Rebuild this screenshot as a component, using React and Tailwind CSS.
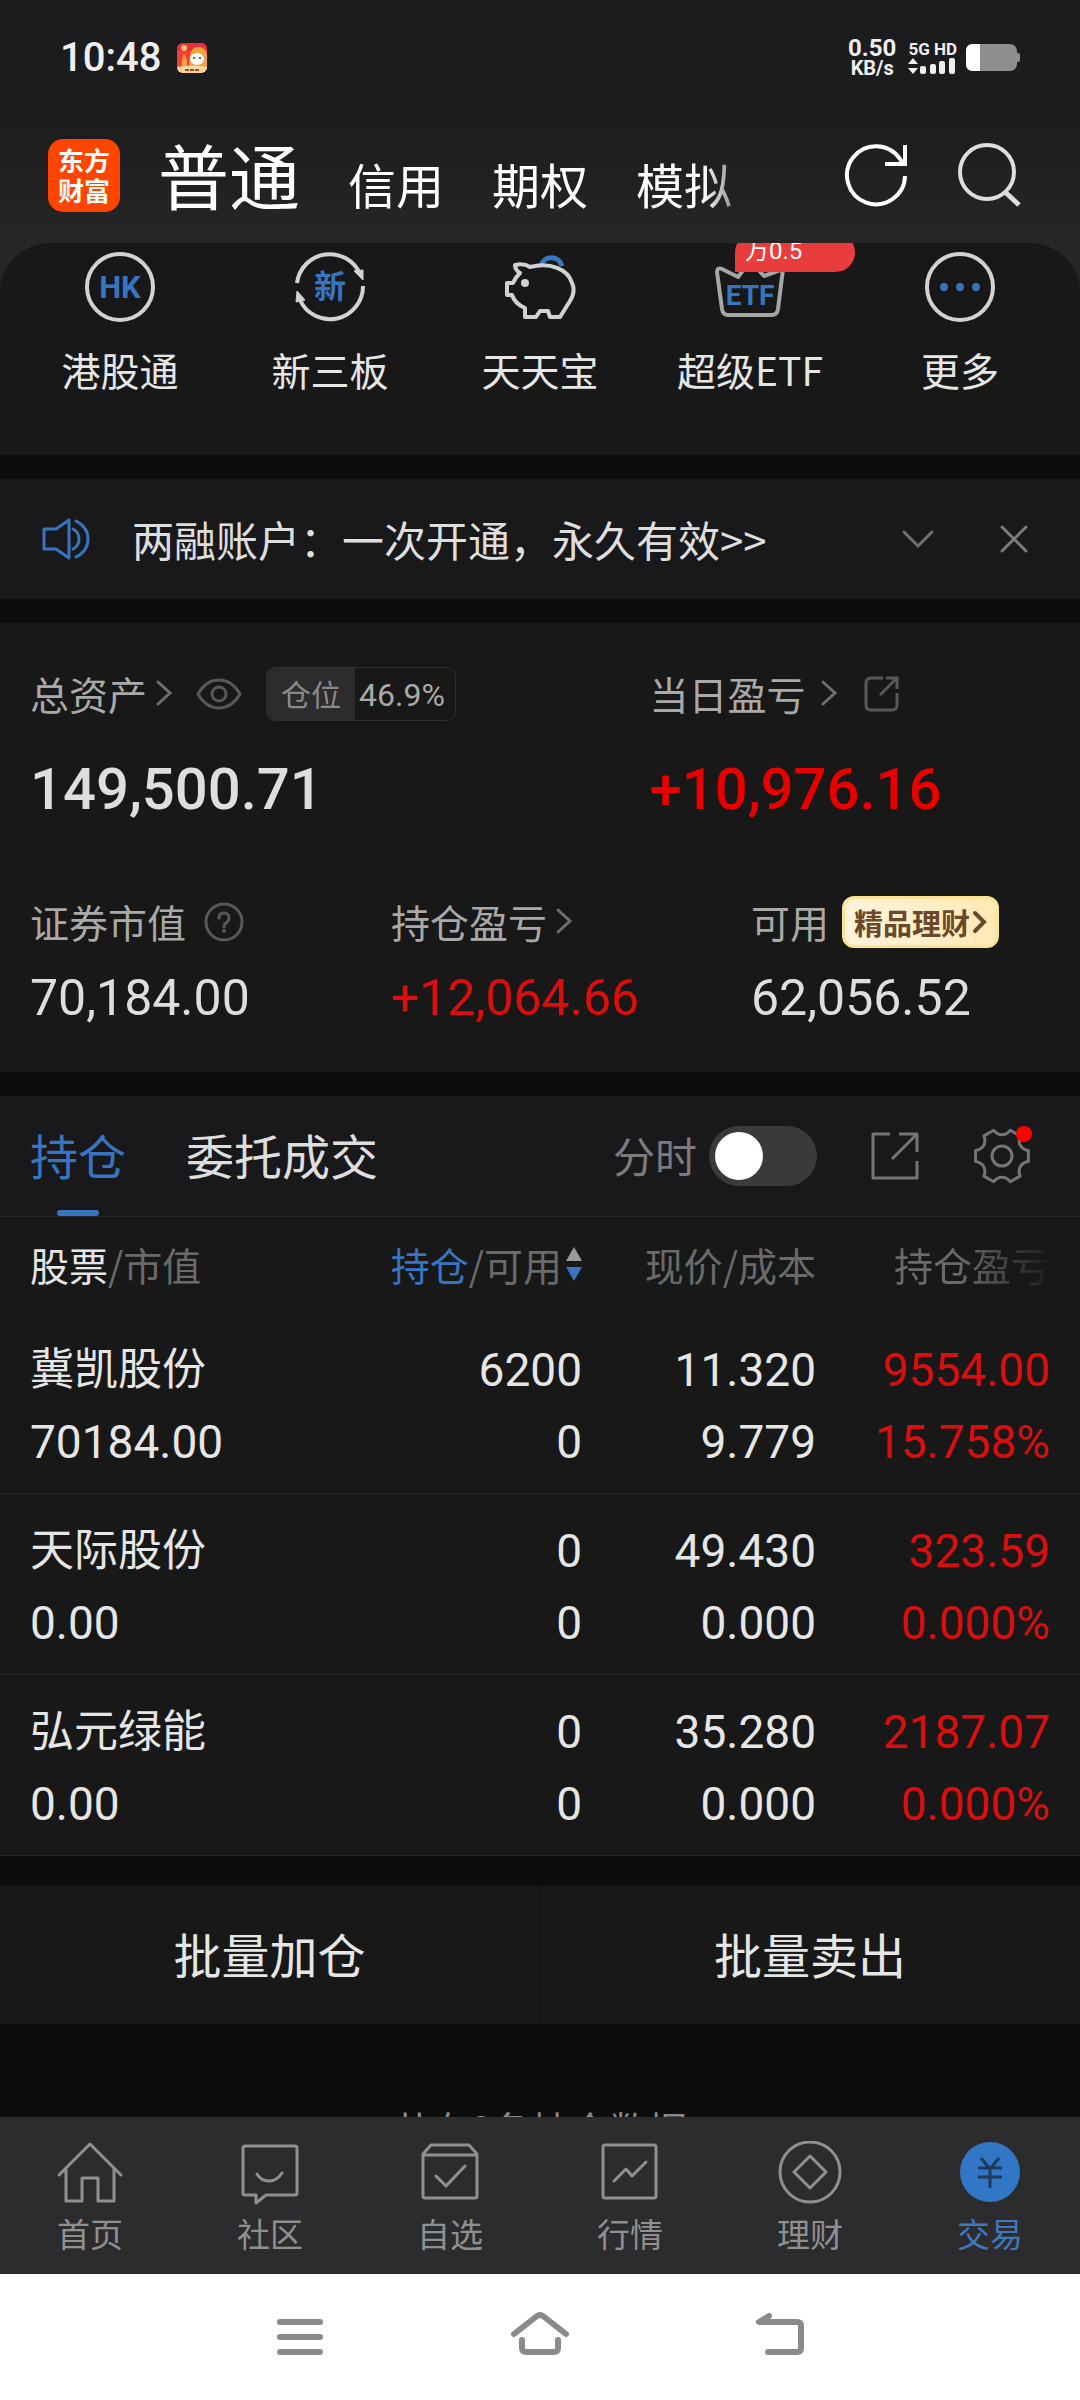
import React from "react";

const FONT = "font-['Noto_Sans_CJK_SC','Noto_Sans',sans-serif]";
const NUM = "font-['Roboto','Noto_Sans_CJK_SC',sans-serif]";

/* ---------- status bar ---------- */

function MascotIcon() {
  return (
    <svg width="30" height="30" viewBox="0 0 30 30" aria-hidden="true">
      <defs>
        <clipPath id="mascot"><rect width="30" height="30" rx="6" /></clipPath>
      </defs>
      <g clipPath="url(#mascot)">
        <rect width="30" height="30" fill="#ef4136" />
        <path d="M0 0h30v8H0z" fill="#e8303a" />
        <path d="M13 12q2-9 9-8q8 1 8 9v14H12z" fill="#f3a23c" />
        <path d="M5 26q-1-9 2-15q4 4 3 15z" fill="#f3a23c" />
        <circle cx="7" cy="5" r="3" fill="#fbc46a" />
        <ellipse cx="20" cy="16" rx="7" ry="6" fill="#fff" />
        <circle cx="17" cy="15" r="1" fill="#333" />
        <circle cx="23" cy="15" r="1" fill="#333" />
        <path d="M0 24q15-3 30 0v6H0z" fill="#fbd9a0" />
        <path d="M8 27h14" stroke="#a5482a" strokeWidth="2" strokeDasharray="4 1" />
      </g>
    </svg>
  );
}

function SignalIcon() {
  return (
    <svg width="48" height="18" viewBox="0 0 48 18" fill="#efefef" aria-hidden="true">
      <path d="M5 1l5 6H0zM5 17l5-6H0z" />
      <rect x="12" y="9" width="6" height="8" rx="2" />
      <rect x="22" y="7" width="6" height="10" rx="2" />
      <rect x="31" y="4" width="6" height="13" rx="2" />
      <rect x="41" y="1" width="6" height="16" rx="2" />
    </svg>
  );
}

function BatteryIcon() {
  return (
    <svg width="54" height="28" viewBox="0 0 54 28" aria-hidden="true">
      <rect x="0" y="0" width="51" height="27" rx="7" fill="#8e8e8e" />
      <path d="M50 9h2q2 0 2 2v5q0 2-2 2h-2z" fill="#8e8e8e" />
      <path d="M7 0h7v27H7q-7 0-7-7V7q0-7 7-7z" fill="#fff" />
    </svg>
  );
}

function StatusBar() {
  return (
    <div className={`flex h-[116px] items-center px-[60px] text-[#efefef] ${NUM}`}>
      <span className="text-[40px] font-medium leading-[56px]">10:48</span>
      <span className="ml-4"><MascotIcon /></span>
      <span className="ml-auto flex flex-col items-center font-bold">
        <span className="text-[24px] leading-[20px]">0.50</span>
        <span className="text-[20px] leading-[20px]">KB/s</span>
      </span>
      <span className="ml-3 flex flex-col">
        <span className="text-[17px] font-bold leading-[16px]">5G HD</span>
        <SignalIcon />
      </span>
      <span className="ml-[9px]"><BatteryIcon /></span>
    </div>
  );
}

/* ---------- header ---------- */

function Header() {
  return (
    <header className="shrink-0 bg-linear-to-b from-[#1c1c1e] from-45% to-[#262626]">
      <StatusBar />
      <div className="flex h-[127px] items-center pl-12 pr-[57px]">
        <button
          type="button"
          aria-label="东方财富"
          className="mb-[9px] flex h-[73px] w-[72px] shrink-0 flex-col items-center justify-center rounded-[15px] bg-[#ff4500] text-[26px] font-bold leading-[30px] text-white"
        >
          <span>东方</span>
          <span>财富</span>
        </button>
        <nav className="ml-[38px] flex w-[605px] shrink items-baseline gap-12 overflow-hidden whitespace-nowrap pb-[3px] text-[48px] leading-[104px] text-white [mask-image:linear-gradient(to_right,#000_calc(100%_-_60px),transparent)]">
          <a href="#normal" className="text-[71px]">普通</a>
          <a href="#credit">信用</a>
          <a href="#option">期权</a>
          <a href="#mock">模拟</a>
        </nav>
        <div className="mb-3 ml-auto flex shrink-0 gap-[47px]">
          <button type="button" aria-label="刷新">
            <svg width="66" height="66" viewBox="0 0 66 66" fill="none" stroke="#fff" strokeWidth="4" aria-hidden="true">
              <path d="M61 35A29 29 0 1 1 56 18L59 23" />
              <path d="M61 4V23H41" />
            </svg>
          </button>
          <button type="button" aria-label="搜索">
            <svg width="66" height="66" viewBox="0 0 66 66" fill="none" stroke="#dedede" strokeWidth="4" aria-hidden="true">
              <circle cx="30" cy="31" r="27" />
              <path d="M47 50L62 64" strokeWidth="5" />
            </svg>
          </button>
        </div>
      </div>
    </header>
  );
}

/* ---------- shortcuts ---------- */

function Glyph({ children }) {
  return (
    <svg width="76" height="76" viewBox="0 0 76 76" fill="none" stroke="#d2d2d2" strokeWidth="4" strokeLinejoin="round" aria-hidden="true">
      {children}
    </svg>
  );
}

const glyphText = "fill-[#3875c0] font-bold";

const shortcuts = [
  {
    label: "港股通",
    icon: (
      <Glyph>
        <circle cx="38" cy="38" r="33" />
        <text x="38" y="49" textAnchor="middle" stroke="none" className={`${glyphText} ${NUM} text-[31px]`}>HK</text>
      </Glyph>
    ),
  },
  {
    label: "新三板",
    icon: (
      <Glyph>
        <path d="M5 34A33 33 0 0 1 68 25M71 37A33 33 0 0 1 8 51" />
        <path d="M62 22L71 21L71 31zM5 42L13 51L4 53z" fill="#d2d2d2" strokeWidth="1" />
        <text x="38" y="49" textAnchor="middle" stroke="none" className={`${glyphText} text-[32px]`}>新</text>
      </Glyph>
    ),
  },
  {
    label: "天天宝",
    icon: (
      <Glyph>
        <path d="M39 16A11 11 0 0 1 60 17" stroke="#3875c0" strokeWidth="5" />
        <path d="M28 18Q22 14 13 16Q13 21 18 24Q13 29 11 34H5V46H10Q13 55 23 59V68H34L38 62H46L48 68H58L68 52Q74 42 70 34C66 20 48 13 28 18Z" />
        <circle cx="23" cy="34" r="4" fill="#d2d2d2" stroke="none" />
      </Glyph>
    ),
  },
  {
    label: "超级ETF",
    badge: "万0.5",
    icon: (
      <Glyph>
        <path d="M26 28L10 20Q5 18 5 23L10 60Q11 66 16 66H60Q65 66 66 60L71 20L52 27L38 12Z" stroke="#a6a6a6" />
        <text x="38" y="56" textAnchor="middle" stroke="none" className={`${glyphText} ${NUM} text-[28px]`}>ETF</text>
      </Glyph>
    ),
  },
  {
    label: "更多",
    icon: (
      <Glyph>
        <circle cx="38" cy="38" r="33" />
        <g fill="#3875c0" stroke="none">
          <circle cx="22" cy="38" r="4" />
          <circle cx="38" cy="38" r="4" />
          <circle cx="54" cy="38" r="4" />
        </g>
      </Glyph>
    ),
  },
];

function Shortcuts() {
  return (
    <div className="bg-[#262626]">
      <nav className="grid grid-cols-5 overflow-hidden rounded-t-[50px] bg-[#181818] px-[15px] pb-[56px] pt-[6px]">
        {shortcuts.map((s) => (
          <a key={s.label} href={`#${s.label}`} className="relative flex flex-col items-center gap-[14px] text-[39px] leading-[60px] text-[#e6e6e6]">
            {s.icon}
            <span>{s.label}</span>
            {s.badge && (
              <span className={`absolute -top-[16px] left-1/2 ml-[-15px] h-[39px] w-[120px] rounded-[20px] rounded-bl-none bg-[#e93c3c] pl-[10px] text-[24px] leading-[36px] text-white ${NUM}`}>
                {s.badge}
              </span>
            )}
          </a>
        ))}
      </nav>
    </div>
  );
}

/* ---------- notice ---------- */

function Notice() {
  return (
    <section className="flex h-[120px] items-center bg-[#19191b] pl-[42px] pr-[51px]">
      <svg width="48" height="44" viewBox="0 0 48 44" fill="none" stroke="#3875c0" strokeWidth="3" strokeLinejoin="round" aria-hidden="true">
        <path d="M2 12H14L27 3V41L14 32H2z" />
        <path d="M31 12Q37 15 37 22Q37 29 31 32M34 4Q46 10 46 22Q46 34 34 40" strokeLinecap="round" />
      </svg>
      <p className="ml-[42px] text-[42px] leading-[60px] text-[#dedede]">两融账户：一次开通，永久有效&gt;&gt;</p>
      <button type="button" aria-label="展开" className="ml-auto">
        <svg width="34" height="34" viewBox="0 0 34 34" fill="none" stroke="#707072" strokeWidth="3" strokeLinecap="round" aria-hidden="true">
          <path d="M3 10L17 24L31 10" />
        </svg>
      </button>
      <button type="button" aria-label="关闭" className="ml-[64px]">
        <svg width="30" height="30" viewBox="0 0 30 30" fill="none" stroke="#7c7c7e" strokeWidth="3" strokeLinecap="round" aria-hidden="true">
          <path d="M3 3L27 27M27 3L3 27" />
        </svg>
      </button>
    </section>
  );
}

/* ---------- assets ---------- */

function Chevron() {
  return (
    <svg width="18" height="28" viewBox="0 0 18 28" fill="none" stroke="#6e6e70" strokeWidth="3" strokeLinecap="round" aria-hidden="true">
      <path d="M3 3L15 14L3 25" />
    </svg>
  );
}

const label = "text-[39px] leading-[56px] text-[#a9a9a9]";
const bigNumber = `mt-[25px] text-[58px] font-medium leading-[84px] ${NUM}`;
const midNumber = `mt-[11px] text-[50px] leading-[70px] ${NUM}`;

function Assets() {
  return (
    <section className="bg-[#181818] pb-[39px] pt-[43px]">
      <div className="grid grid-cols-[59fr_41fr] pl-[30px]">
        <div>
          <div className={`flex h-[56px] items-center ${label}`}>
            <a href="#assets" className="flex items-center gap-2 pb-[2px]">总资产<Chevron /></a>
            <button type="button" aria-label="隐藏金额" className="ml-[23px]">
              <svg width="46" height="32" viewBox="0 0 46 32" fill="none" stroke="#58585a" strokeWidth="3" aria-hidden="true">
                <path d="M2 16Q10 2 23 2T44 16Q36 30 23 30T2 16z" />
                <circle cx="23" cy="16" r="7" />
              </svg>
            </button>
            <span className="ml-6 flex h-[54px] items-stretch overflow-hidden rounded-[9px] border border-[#2f2f31] text-[30px] leading-[50px]">
              <span className="bg-[#2c2c2e] px-[14px] text-[#8a8a8c]">仓位</span>
              <span className={`pl-1 pr-[10px] text-[32px] leading-[54px] ${NUM}`}>46.9%</span>
            </span>
          </div>
          <p className={`${bigNumber} text-[#dedede]`}>149,500.71</p>
        </div>
        <div>
          <div className={`flex h-[56px] items-center ${label}`}>
            <a href="#today" className="flex items-center gap-[14px] pb-[2px]">当日盈亏<Chevron /></a>
            <button type="button" aria-label="分享当日盈亏" className="ml-[26px]">
              <svg width="36" height="36" viewBox="0 0 36 36" fill="none" stroke="#58585a" strokeWidth="3" aria-hidden="true">
                <path d="M19 2H7Q2 2 2 7V29Q2 34 7 34H28Q33 34 33 29V17M22 2H33V13M33 2L16 19" />
              </svg>
            </button>
          </div>
          <p className={`${bigNumber} text-[#e60000]`}>+10,976.16</p>
        </div>
      </div>
      <div className="mt-[61px] grid grid-cols-3">
        <div className="pl-[30px]">
          <div className={`flex h-[60px] items-center ${label}`}>
            <span className="pb-[2px]">证券市值</span>
            <button type="button" aria-label="证券市值说明" className="ml-[18px]">
              <svg width="40" height="40" viewBox="0 0 40 40" fill="none" stroke="#58585a" strokeWidth="3" aria-hidden="true">
                <circle cx="20" cy="20" r="18" />
                <path d="M15 16Q15 11 20 11T25 16Q25 19 22 21Q20 22 20 25" strokeLinecap="round" />
                <circle cx="20" cy="29" r="2" fill="#58585a" stroke="none" />
              </svg>
            </button>
          </div>
          <p className={`${midNumber} text-[#dedede]`}>70,184.00</p>
        </div>
        <div className="pl-[31px]">
          <a href="#profit" className={`flex h-[60px] items-center gap-2 pb-[2px] ${label}`}>持仓盈亏<Chevron /></a>
          <p className={`${midNumber} text-[#dc0d0d]`}>+12,064.66</p>
        </div>
        <div className="pl-[31px]">
          <div className={`flex h-[60px] items-center ${label}`}>
            <span className="pb-[2px]">可用</span>
            <a href="#finance" className="ml-[13px] flex h-[52px] items-center gap-[2px] rounded-[12px] border-[3px] border-[#fbe294] bg-linear-to-r from-[#fff3dc] to-[#ffe9b4] px-[9px] text-[29px] font-bold leading-[44px] text-[#6b4829]">
              精品理财
              <svg width="15" height="24" viewBox="0 0 15 24" fill="none" stroke="#6b4829" strokeWidth="4" strokeLinecap="round" aria-hidden="true">
                <path d="M3 3L12 12L3 21" />
              </svg>
            </a>
          </div>
          <p className={`${midNumber} text-[#dedede]`}>62,056.52</p>
        </div>
      </div>
    </section>
  );
}

/* ---------- positions ---------- */

/* Six teeth, with a shallow curve between each pair. */
const gearPath = (() => {
  const at = (r, deg) => {
    const a = (deg * Math.PI) / 180;
    return `${(29 + r * Math.cos(a)).toFixed(1)} ${(29 + r * Math.sin(a)).toFixed(1)}`;
  };
  let d = "";
  for (let t = 0; t < 360; t += 60) {
    d += `${t ? "L" : "M"}${at(27, t - 12)}L${at(27, t + 12)}`;
    d += `C${at(20, t + 20)} ${at(20, t + 40)} ${at(27, t + 48)}`;
  }
  return d + "Z";
})();

function PositionTabs() {
  return (
    <div className="flex h-[121px] items-stretch border-b border-[#262628] bg-[#19191b] pl-[30px] pr-[49px]">
      <button type="button" className="relative pb-1 text-[48px] text-[#3875c0]">
        持仓
        <span className="absolute bottom-0 left-1/2 h-[6px] w-[42px] -translate-x-1/2 rounded-full bg-[#3875c0]" />
      </button>
      <button type="button" className="ml-[60px] pb-1 text-[48px] text-[#dedede]">委托成交</button>
      <label className="ml-auto flex items-center text-[42px] text-[#7c7c7e]">
        <span className="pb-1">分时</span>
        <input type="checkbox" role="switch" className="peer sr-only" />
        <span className="ml-[12px] flex h-[60px] w-[108px] items-center rounded-full bg-[#3a3a3c] p-[6px] peer-checked:justify-end peer-checked:bg-[#3875c0]">
          <span className="size-12 rounded-full bg-white" />
        </span>
      </label>
      <button type="button" aria-label="分享持仓" className="ml-[54px]">
        <svg width="48" height="48" viewBox="0 0 48 48" fill="none" stroke="#757577" strokeWidth="3" strokeLinejoin="round" aria-hidden="true">
          <path d="M19 2H2V46H46V29M28 2H46V20M45 3L21 27" />
        </svg>
      </button>
      <button type="button" aria-label="设置" className="relative my-auto ml-[54px]">
        <svg width="58" height="58" viewBox="0 0 58 58" fill="none" stroke="#757577" strokeWidth="3" strokeLinejoin="round" aria-hidden="true">
          <path d={gearPath} />
          <circle cx="29" cy="29" r="10" />
        </svg>
        <span className="absolute -right-[1px] -top-[1px] size-4 rounded-full bg-[#ff0000]" />
      </button>
    </div>
  );
}

const rows = [
  { name: "冀凯股份", value: "70184.00", held: "6200", free: "0", price: "11.320", cost: "9.779", gain: "9554.00", rate: "15.758%" },
  { name: "天际股份", value: "0.00", held: "0", free: "0", price: "49.430", cost: "0.000", gain: "323.59", rate: "0.000%" },
  { name: "弘元绿能", value: "0.00", held: "0", free: "0", price: "35.280", cost: "0.000", gain: "2187.07", rate: "0.000%" },
];

function Pair({ top, bottom }) {
  return (
    <>
      <span className="block">{top}</span>
      <span className="block">{bottom}</span>
    </>
  );
}

function Positions() {
  return (
    <section className="bg-[#181818]">
      <PositionTabs />
      <table className="w-full table-fixed border-collapse">
        <colgroup>
          <col />
          <col className="w-[220px]" />
          <col className="w-[234px]" />
          <col className="w-[264px]" />
        </colgroup>
        <thead>
          <tr className="h-[96px] text-[39px] leading-[56px] text-[#6a6a6a]">
            <th className="pb-[2px] pl-[30px] text-left font-normal"><span className="text-[#e6e6e6]">股票</span>/市值</th>
            <th className="p-0 pb-[2px] text-right font-normal">
              <button type="button" className="inline-flex items-center gap-1 whitespace-nowrap">
                <span><span className="text-[#3875c0]">持仓</span>/可用</span>
                <svg width="16" height="36" viewBox="0 0 16 36" aria-hidden="true">
                  <path d="M8 1L16 15H0z" fill="#9a9a9a" />
                  <path d="M8 35L16 21H0z" fill="#3875c0" />
                </svg>
              </button>
            </th>
            <th className="p-0 pb-[2px] text-right font-normal">现价/成本</th>
            <th className="pb-[2px] pr-[30px] text-right font-normal [mask-image:linear-gradient(to_right,#000_calc(100%_-_120px),transparent_calc(100%_-_24px))]">持仓盈亏</th>
          </tr>
        </thead>
        <tbody>
          {rows.map((r) => (
            <tr key={r.name} className={`border-b border-[#262628] text-right align-top text-[46px] leading-[72px] text-[#e6e6e6] ${NUM}`}>
              <td className="pb-[15px] pl-[30px] pt-[21px] text-left">
                <span className="block text-[44px]">{r.name}</span>
                <span className="block">{r.value}</span>
              </td>
              <td className="pt-[21px]"><Pair top={r.held} bottom={r.free} /></td>
              <td className="pt-[21px]"><Pair top={r.price} bottom={r.cost} /></td>
              <td className="pr-[30px] pt-[21px] text-[#d90f0f]"><Pair top={r.gain} bottom={r.rate} /></td>
            </tr>
          ))}
        </tbody>
      </table>
    </section>
  );
}

function BatchActions() {
  return (
    <div className="grid grid-cols-2 divide-x divide-[#0f0f0f] bg-[#181818] text-[48px] leading-[72px] text-[#e6e6e6]">
      <button type="button" className="pb-[35px] pt-[31px]">批量加仓</button>
      <button type="button" className="pb-[35px] pt-[31px]">批量卖出</button>
    </div>
  );
}

/* ---------- bottom bars ---------- */

function TabGlyph({ children }) {
  return (
    <svg width="68" height="66" viewBox="0 0 68 66" fill="none" stroke="#909092" strokeWidth="3" strokeLinejoin="round" strokeLinecap="round" aria-hidden="true">
      {children}
    </svg>
  );
}

const tabs = [
  { label: "首页", icon: <path d="M3 34L34 3L65 34M10 28V60H26V37H42V60H58V28" /> },
  { label: "社区", icon: <path d="M9 5H59Q61 5 61 7V52Q61 54 59 54H30L20 62V54H9Q7 54 7 52V7Q7 5 9 5zM21 33Q25 40 33 40T46 32" /> },
  { label: "自选", icon: <path d="M7 13L15 4H53L61 13V55Q61 57 59 57H9Q7 57 7 55zM7 14H61M20 35L30 45L49 25" /> },
  { label: "行情", icon: <path d="M9 4H58Q60 4 60 6V55Q60 57 58 57H9Q7 57 7 55V6Q7 4 9 4zM18 40L30 28L36 35L50 21" /> },
  {
    label: "理财",
    icon: (
      <>
        <circle cx="34" cy="31" r="30" />
        <path d="M34 15L50 31L34 47L18 31z" />
      </>
    ),
  },
  {
    label: "交易",
    active: true,
    icon: (
      <>
        <circle cx="34" cy="31" r="30" fill="#3276c6" stroke="none" />
        <path d="M25 17L34 28L43 17M22 27H46M22 36H46M34 28V47" stroke="#1f3a5a" strokeLinecap="butt" />
      </>
    ),
  },
];

function TabBar() {
  return (
    <nav className="grid shrink-0 grid-cols-6 bg-[#2c2c2e] pb-[17px] pt-6 text-[33px] leading-[48px] text-[#909092]">
      {tabs.map((t) => (
        <a key={t.label} href={`#${t.label}`} className={t.active ? "flex flex-col items-center gap-[2px] text-[#3f78bb]" : "flex flex-col items-center gap-[2px]"}>
          <TabGlyph>{t.icon}</TabGlyph>
          <span>{t.label}</span>
        </a>
      ))}
    </nav>
  );
}

function SysGlyph({ d }) {
  return (
    <svg width="64" height="50" viewBox="0 0 64 50" fill="none" stroke="#8a8a8a" strokeWidth="6" strokeLinecap="round" strokeLinejoin="round" aria-hidden="true">
      <path d={d} />
    </svg>
  );
}

function SystemBar() {
  return (
    <div className="shrink-0 bg-white">
      <div className="mx-auto grid h-[126px] w-2/3 grid-cols-3 place-items-center pb-1">
        <button type="button" aria-label="最近任务"><SysGlyph d="M12 12H52M12 27H52M12 42H52" /></button>
        <button type="button" aria-label="主屏幕"><SysGlyph d="M6 24L29 6Q32 4 35 6L58 24M14 30V38Q14 42 18 42H46Q50 42 50 38V30" /></button>
        <button type="button" aria-label="返回"><SysGlyph d="M21 6L11 12H49Q53 12 53 16V38Q53 42 49 42H20" /></button>
      </div>
    </div>
  );
}

export default function App() {
  return (
    <div className={`flex h-screen flex-col overflow-hidden bg-[#0d0d0d] ${FONT}`}>
      <Header />
      <main className="min-h-0 flex-1 overflow-hidden">
        <div className="flex flex-col gap-6">
          <Shortcuts />
          <Notice />
          <Assets />
          <Positions />
        </div>
        <div className="mt-[30px]"><BatchActions /></div>
        <p className="mt-[76px] text-center text-[39px] leading-[56px] text-[#8a8a8c]">共有3条持仓数据</p>
      </main>
      <TabBar />
      <SystemBar />
    </div>
  );
}
